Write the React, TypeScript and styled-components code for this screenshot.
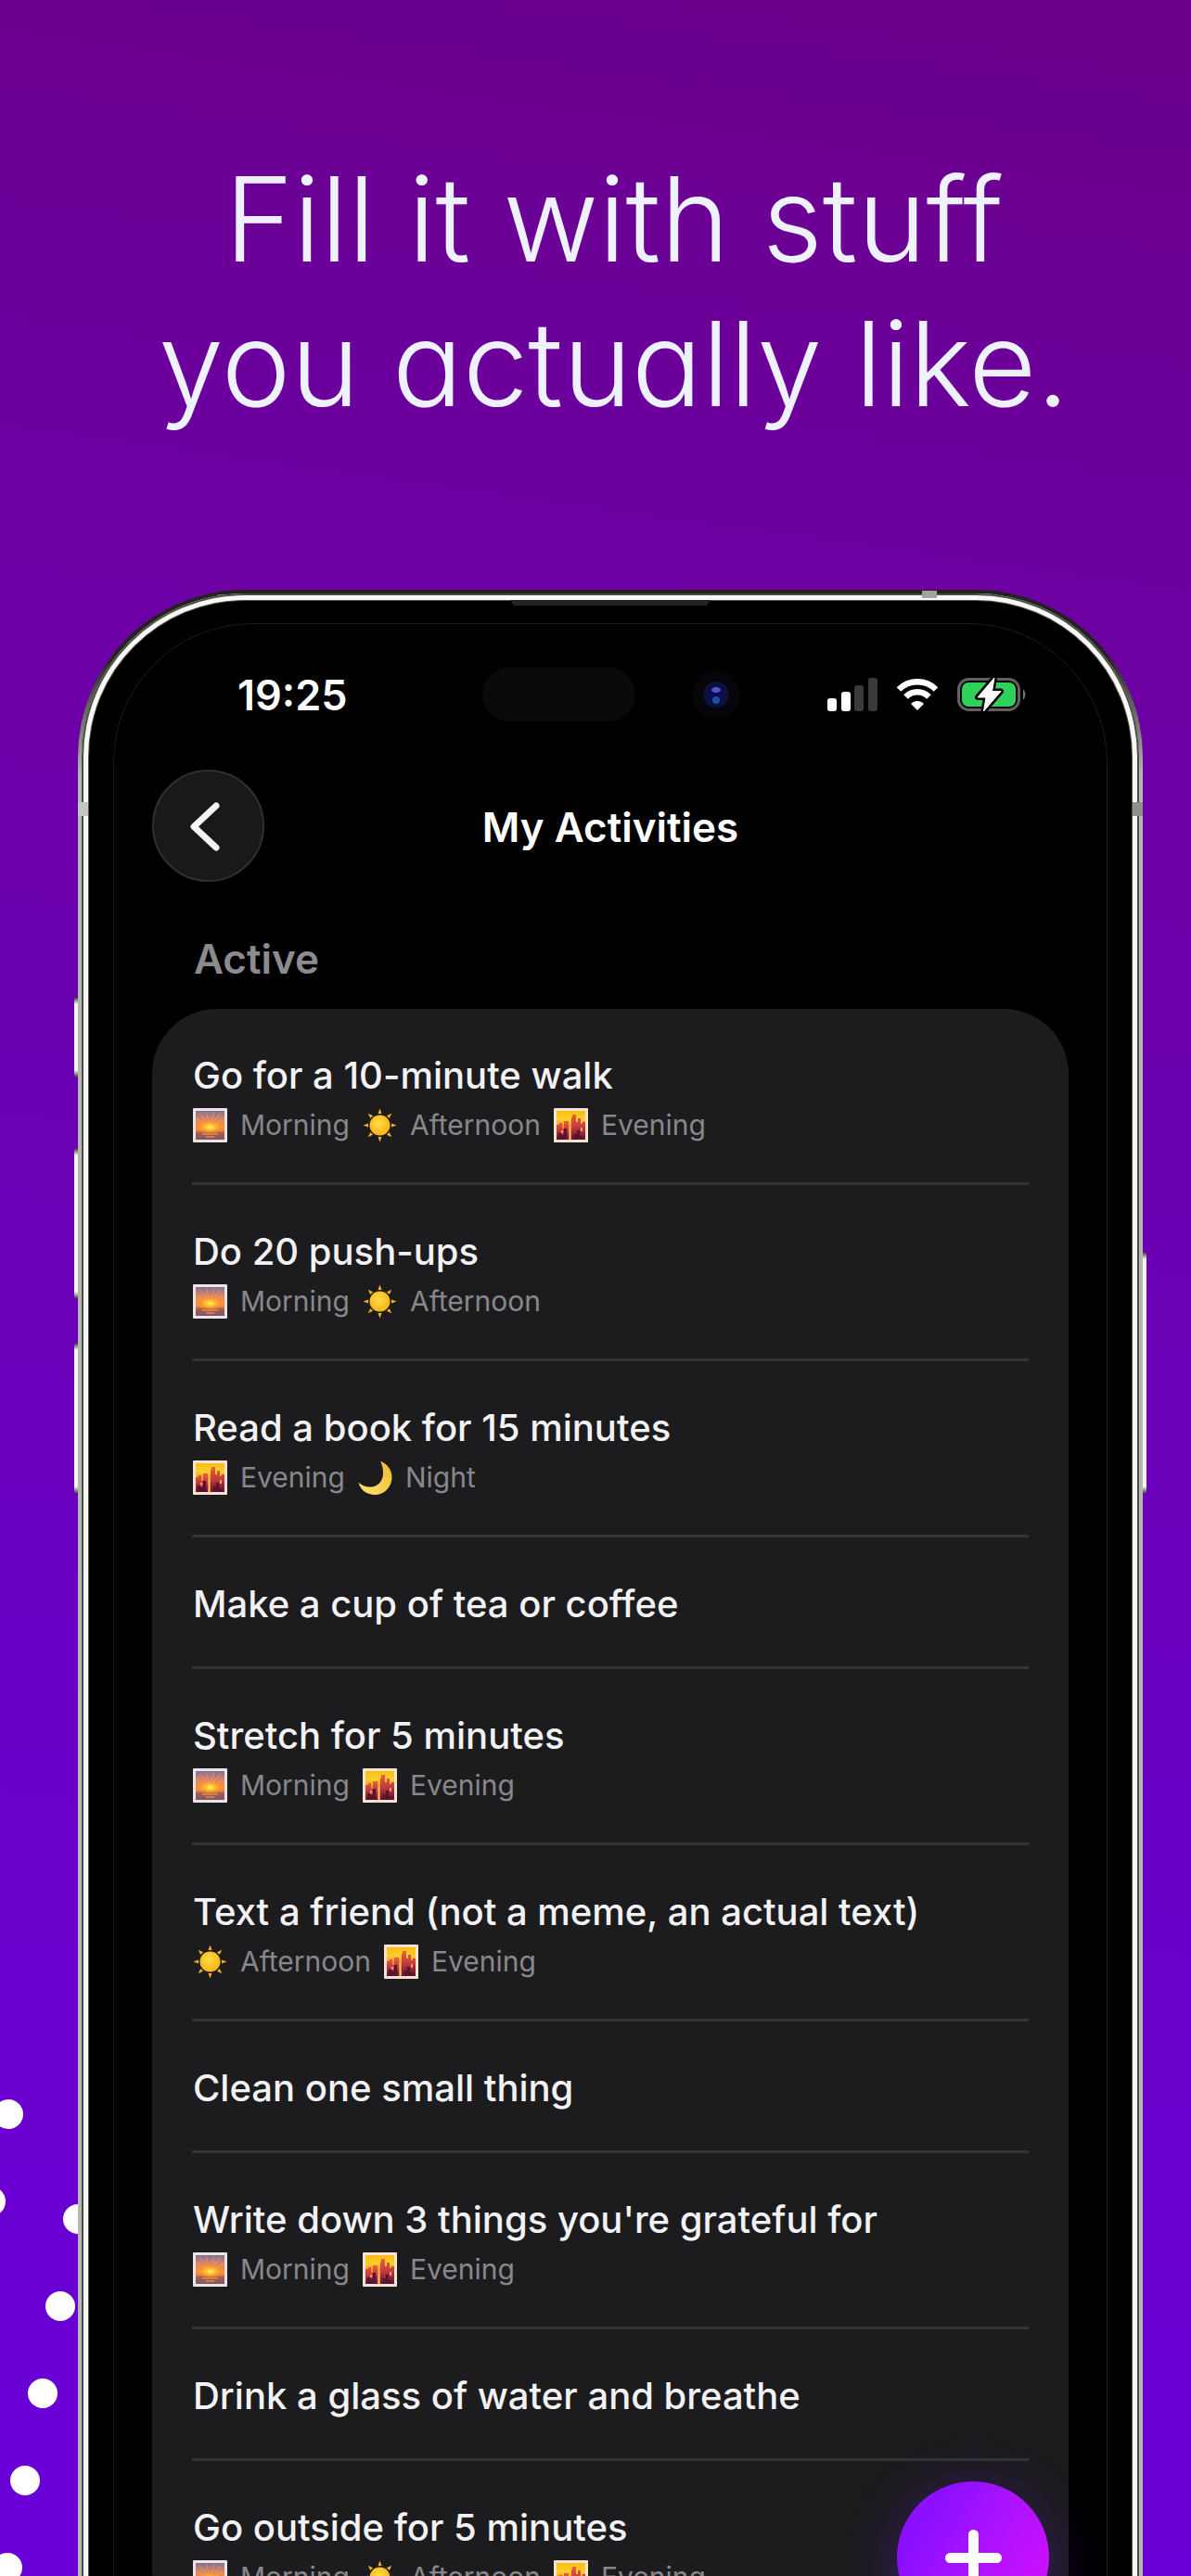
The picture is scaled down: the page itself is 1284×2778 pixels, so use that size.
import React from "react";
import styled, { createGlobalStyle } from "styled-components";

const GlobalStyle = createGlobalStyle`
  *, *::before, *::after { box-sizing: border-box; }
  body { margin: 0; background: #6a00b8; }
  h1, h2, h3, p, ul { margin: 0; padding: 0; }
  ul { list-style: none; }
  button { font: inherit; border: 0; padding: 0; cursor: pointer; }
`;

const Poster = styled.main`
  position: relative;
  display: flex;
  flex-direction: column;
  height: 100vh;
  overflow: hidden;
  font-family: Inter, "Liberation Sans", sans-serif;
  color: #f2f2f4;
  background: linear-gradient(188deg, #6a008a 0%, #6c00a0 22%, #6b00b6 50%, #6900cc 76%, #6900d8 100%);
`;

const Headline = styled.h1`
  padding: 158px 0 166px 40px;
  text-align: center;
  font-size: 126px;
  line-height: 156px;
  font-weight: 300;
  font-feature-settings: "cv11";
  color: #eef2ff;

  span {
    display: block;
  }
`;

const Dots = styled.svg`
  position: absolute;
  left: 0;
  bottom: 0;
  width: 110px;
  height: 540px;
`;

const Phone = styled.section`
  position: relative;
  flex-shrink: 0;
  margin: 0 52px 0 84px;
  padding: 79px 76px 320px;
  border: 4px solid transparent;
  border-radius: 180px;
  background:
    linear-gradient(#000, #000) padding-box,
    linear-gradient(180deg, #24221f 0, #24221f 70px, #b6b6b2 200px) border-box;
  box-shadow: inset 0 0 0 2px #4c4a48, inset 0 0 0 7px #f8f8f4, inset 0 0 0 8px #55544f;

  &::before {
    content: "";
    position: absolute;
    inset: 32px 34px;
    border: 1px solid #1b1b1b;
    border-radius: 150px;
    pointer-events: none;
  }
`;

const SideKey = styled.span<{ $side: "left" | "right"; $top: number; $height: number }>`
  position: absolute;
  ${(p) => p.$side}: -8px;
  top: ${(p) => p.$top}px;
  width: 4px;
  height: ${(p) => p.$height}px;
  border-radius: ${(p) => (p.$side === "left" ? "4px 0 0 4px" : "0 4px 4px 0")};
  background: linear-gradient(#333 0, #f4f4f0 8px, #f4f4f0 calc(100% - 8px), #333 100%);
`;

const SideBand = styled.span<{ $side: "left" | "right" }>`
  position: absolute;
  ${(p) => p.$side}: -4px;
  top: 225px;
  width: 11px;
  height: 15px;
  background: ${(p) => (p.$side === "left" ? "#c4c4c0" : "#8f8f8c")};
`;

const TopBand = styled.span`
  position: absolute;
  top: -3px;
  right: 218px;
  width: 16px;
  height: 8px;
  background: #a3a19f;
`;

const Earpiece = styled.span`
  position: absolute;
  top: 7px;
  left: 50%;
  width: 216px;
  height: 6px;
  margin-left: -108px;
  background: #242424;
  clip-path: polygon(0 0, 100% 0, 98% 100%, 2% 100%);
`;

const StatusBar = styled.div`
  display: grid;
  grid-template-columns: 1fr auto 1fr;
  align-items: center;
  height: 58px;
  padding: 0 45px 0 92px;
`;

const Clock = styled.time`
  padding-top: 2px;
  font-size: 45px;
  line-height: 58px;
  font-weight: 600;
  color: #fff;
`;

const Sensors = styled.div`
  display: flex;
  align-items: center;
  gap: 61px;
  margin-left: -45px;
`;

const Island = styled.span`
  width: 165px;
  height: 58px;
  border-radius: 29px;
  background: #0a0a0a;
`;

const Camera = styled.span`
  display: grid;
  place-items: center;
  width: 52px;
  height: 52px;
  border-radius: 50%;
  background: #07050a;

  svg {
    display: block;
  }
`;

const StatusIcons = styled.div`
  display: flex;
  align-items: center;
  justify-content: flex-end;
  gap: 20px;

  svg {
    display: block;
    flex-shrink: 0;
  }
`;

const NavBar = styled.header`
  display: grid;
  grid-template-columns: 121px 1fr 121px;
  align-items: center;
  margin-top: 53px;
`;

const BackButton = styled.button`
  display: grid;
  place-items: center;
  width: 121px;
  height: 121px;
  border: 2px solid #303032;
  border-radius: 50%;
  background: #19191a;
`;

const NavTitle = styled.h2`
  padding-top: 3px;
  text-align: center;
  font-size: 44px;
  line-height: 53px;
  font-weight: 600;
  color: #fff;
`;

const SectionLabel = styled.h3`
  margin: 57px 0 27px;
  padding-left: 45px;
  font-size: 44px;
  line-height: 53px;
  font-weight: 600;
  color: #8b8b90;
`;

const Card = styled.ul`
  padding: 0 43px;
  border-radius: 70px;
  background: #1c1c1e;
`;

const Row = styled.li`
  padding: 45px 1px 41px;

  & + & {
    border-top: 3px solid #343437;
  }
`;

const RowTitle = styled.p`
  font-size: 40px;
  line-height: 53px;
  font-weight: 500;
  white-space: nowrap;
`;

const Tags = styled.div`
  display: flex;
  gap: 14px;
  padding-top: 6px;
`;

const Tag = styled.span`
  display: flex;
  align-items: center;
  gap: 14px;
  font-size: 30px;
  line-height: 42px;
  color: #88888c;

  svg {
    display: block;
  }
`;

const AddButton = styled.button`
  position: absolute;
  right: 153px;
  bottom: -62px;
  display: grid;
  place-items: center;
  width: 164px;
  height: 164px;
  border-radius: 50%;
  background: linear-gradient(120deg, #8a10ff 20%, #ab12ff 52%, #d010ff 90%);
  box-shadow: 0 12px 60px rgba(122, 20, 255, 0.32);
`;

type Slot = "Morning" | "Afternoon" | "Evening" | "Night";

const MorningIcon = () => (
  <svg width="37" height="37" viewBox="0 0 37 37" aria-hidden="true">
    <defs>
      <linearGradient id="dawn" x1="0" y1="0" x2="0" y2="1">
        <stop offset="0" stopColor="#7d7191" />
        <stop offset="0.28" stopColor="#d9826a" />
        <stop offset="0.55" stopColor="#fb9330" />
        <stop offset="0.68" stopColor="#f08a3a" />
        <stop offset="0.76" stopColor="#a85f55" />
        <stop offset="1" stopColor="#81545f" />
      </linearGradient>
      <radialGradient id="dawnGlow">
        <stop offset="0" stopColor="#fff36a" />
        <stop offset="0.35" stopColor="#ffc233" />
        <stop offset="1" stopColor="#ff8a20" stopOpacity="0" />
      </radialGradient>
    </defs>
    <rect width="37" height="37" rx="1" fill="#ebe4ea" />
    <rect x="3" y="3" width="31" height="31" fill="url(#dawn)" />
    <path d="M18.500 20L7 5M18.500 20L14 4M18.500 20L23 4M18.500 20L30 5M18.500 20L33 12M18.500 20L4 12" stroke="#ffb060" strokeWidth="1" opacity="0.5" />
    <ellipse cx="18.500" cy="20.500" rx="14" ry="8" fill="url(#dawnGlow)" />
    <path d="M10 28H27M14 31H23" stroke="#e88b45" strokeWidth="1.500" />
  </svg>
);

const AfternoonIcon = () => (
  <svg width="37" height="37" viewBox="0 0 37 37" aria-hidden="true">
    <defs>
      <radialGradient id="sunBody" cx="0.45" cy="0.4">
        <stop offset="0" stopColor="#ffdf4a" />
        <stop offset="1" stopColor="#f9b81b" />
      </radialGradient>
    </defs>
    {[0, 45, 90, 135, 180, 225, 270, 315].map((a) => (
      <path key={a} d="M18.500 0.500L20.500 6H16.500Z" fill="#f5b024" transform={`rotate(${a} 18.500 18.500)`} />
    ))}
    <circle cx="18.500" cy="18.500" r="11" fill="url(#sunBody)" />
  </svg>
);

const EveningIcon = () => (
  <svg width="37" height="37" viewBox="0 0 37 37" aria-hidden="true">
    <defs>
      <linearGradient id="dusk" x1="0" y1="0" x2="0" y2="1">
        <stop offset="0" stopColor="#fdbb16" />
        <stop offset="0.3" stopColor="#fbd02c" />
        <stop offset="0.7" stopColor="#ee6a2e" />
      </linearGradient>
      <linearGradient id="tower" x1="0" y1="0" x2="0" y2="1">
        <stop offset="0" stopColor="#ea5f40" />
        <stop offset="0.5" stopColor="#c23a3c" />
        <stop offset="1" stopColor="#5d1330" />
      </linearGradient>
    </defs>
    <rect width="37" height="37" rx="1" fill="#f6e3d2" />
    <rect x="3" y="3" width="31" height="31" fill="url(#dusk)" />
    <path d="M3 18H6V16H9V22H11V14H16V34H3Z" fill="url(#tower)" />
    <path d="M19 34V10H20V7H24V15H26V11H29V17H31V15H34V34Z" fill="url(#tower)" />
    <path d="M5 34V27H8V29H11V22H14V34ZM22 34V28H25V24H28V30H31V34Z" fill="#591230" />
    <path d="M17.500 20V34M9 24V27M30 21V25" stroke="#ffc07a" strokeWidth="1.500" />
  </svg>
);

const NightIcon = () => (
  <svg width="37" height="37" viewBox="0 0 37 37" aria-hidden="true">
    <defs>
      <linearGradient id="moon" x1="0" y1="1" x2="1" y2="0">
        <stop offset="0" stopColor="#ffe46a" />
        <stop offset="1" stopColor="#eebb33" />
      </linearGradient>
    </defs>
    <path d="M24 0.500C32 4 37 11 36.500 19C36 29 28 37 18.500 37C9.500 37 2.500 32 0.500 23.500C5 28 11 29.500 17 28C27 25.500 30 13 24 0.500Z" fill="url(#moon)" />
  </svg>
);

const slotIcons: Record<Slot, () => React.ReactElement> = {
  Morning: MorningIcon,
  Afternoon: AfternoonIcon,
  Evening: EveningIcon,
  Night: NightIcon,
};

const activities: { title: string; slots: Slot[] }[] = [
  { title: "Go for a 10-minute walk", slots: ["Morning", "Afternoon", "Evening"] },
  { title: "Do 20 push-ups", slots: ["Morning", "Afternoon"] },
  { title: "Read a book for 15 minutes", slots: ["Evening", "Night"] },
  { title: "Make a cup of tea or coffee", slots: [] },
  { title: "Stretch for 5 minutes", slots: ["Morning", "Evening"] },
  { title: "Text a friend (not a meme, an actual text)", slots: ["Afternoon", "Evening"] },
  { title: "Clean one small thing", slots: [] },
  { title: "Write down 3 things you're grateful for", slots: ["Morning", "Evening"] },
  { title: "Drink a glass of water and breathe", slots: [] },
  { title: "Go outside for 5 minutes", slots: ["Morning", "Afternoon", "Evening"] },
];

const SignalIcon = () => (
  <svg width="54" height="36" viewBox="0 0 54 36" aria-label="Signal">
    <rect x="0" y="22" width="10" height="14" rx="3" fill="#fff" />
    <rect x="15" y="15" width="10" height="21" rx="3" fill="#fff" />
    <rect x="29" y="8" width="10" height="28" rx="3" fill="#3a3a3c" />
    <rect x="44" y="0" width="10" height="36" rx="3" fill="#3a3a3c" />
  </svg>
);

const WifiIcon = () => (
  <svg width="46" height="34" viewBox="0 0 46 34" fill="none" aria-label="Wi-Fi">
    <path d="M3 11.500C14 0.500 32 0.500 43 11.500" stroke="#fff" strokeWidth="6.500" />
    <path d="M10.500 19.500C17.500 12.500 28.500 12.500 35.500 19.500" stroke="#fff" strokeWidth="6.500" />
    <path d="M16 27C20 23 26 23 30 27L23 34Z" fill="#fff" />
  </svg>
);

const BatteryIcon = () => (
  <svg width="75" height="38" viewBox="0 0 75 38" aria-label="Battery charging">
    <rect x="1.500" y="2.500" width="65" height="33" rx="11" fill="#000" stroke="#61615f" strokeWidth="3" />
    <rect x="5" y="6" width="58" height="26" rx="7" fill="#30d158" />
    <path d="M71 13.500C74 15 74 23 71 24.500Z" fill="#77777a" />
    <path d="M40 1L22 22H31L28.500 37L47 15.500H37.500Z" fill="#fff" stroke="#000" strokeWidth="6" strokeLinejoin="round" />
    <path d="M40 1L22 22H31L28.500 37L47 15.500H37.500Z" fill="#fff" stroke="#fff" strokeWidth="1" strokeLinejoin="round" />
  </svg>
);

const dots = [
  [9, 42],
  [-10, 136],
  [84, 155],
  [65, 249],
  [46, 343],
  [27, 437],
  [8, 531],
];

export default function App() {
  return (
    <>
      <GlobalStyle />
      <Poster>
        <Headline>
          <span>Fill it with stuff</span>
          <span>you actually like.</span>
        </Headline>
        <Dots viewBox="0 0 110 540" aria-hidden="true">
          {dots.map(([x, y]) => (
            <circle key={y} cx={x} cy={y} r="16" fill="#fff" />
          ))}
        </Dots>
        <Phone>
          <SideKey $side="left" $top={435} $height={87} />
          <SideKey $side="left" $top={598} $height={163} />
          <SideKey $side="left" $top={808} $height={163} />
          <SideKey $side="right" $top={710} $height={261} />
          <SideBand $side="left" />
          <SideBand $side="right" />
          <TopBand />
          <Earpiece />
          <StatusBar>
            <Clock>19:25</Clock>
            <Sensors>
              <Island />
              <Camera>
                <svg width="28" height="28" viewBox="0 0 28 28" aria-hidden="true">
                  <circle cx="14" cy="14" r="14" fill="#0a1238" />
                  <circle cx="14" cy="14" r="10" fill="#0a0e50" />
                  <ellipse cx="14" cy="9" rx="5" ry="3" fill="#5656c8" />
                  <circle cx="14" cy="20" r="4" fill="#1c4fa0" />
                </svg>
              </Camera>
            </Sensors>
            <StatusIcons>
              <SignalIcon />
              <WifiIcon />
              <BatteryIcon />
            </StatusIcons>
          </StatusBar>
          <NavBar>
            <BackButton aria-label="Back">
              <svg width="40" height="60" viewBox="0 0 40 60" fill="none" aria-hidden="true">
                <path d="M28 8L4 30.500L28 53" stroke="#f4f4f4" strokeWidth="7" strokeLinecap="round" strokeLinejoin="round" />
              </svg>
            </BackButton>
            <NavTitle>My Activities</NavTitle>
          </NavBar>
          <SectionLabel>Active</SectionLabel>
          <Card>
            {activities.map(({ title, slots }) => (
              <Row key={title}>
                <RowTitle>{title}</RowTitle>
                {slots.length > 0 && (
                  <Tags>
                    {slots.map((slot) => {
                      const Icon = slotIcons[slot];
                      return (
                        <Tag key={slot}>
                          <Icon />
                          {slot}
                        </Tag>
                      );
                    })}
                  </Tags>
                )}
              </Row>
            ))}
          </Card>
        </Phone>
        <AddButton aria-label="Add activity">
          <svg width="61" height="61" viewBox="0 0 61 61" aria-hidden="true">
            <path d="M30.500 5.500V55.500M5.500 30.500H55.500" stroke="#fff" strokeWidth="11" strokeLinecap="round" />
          </svg>
        </AddButton>
      </Poster>
    </>
  );
}
